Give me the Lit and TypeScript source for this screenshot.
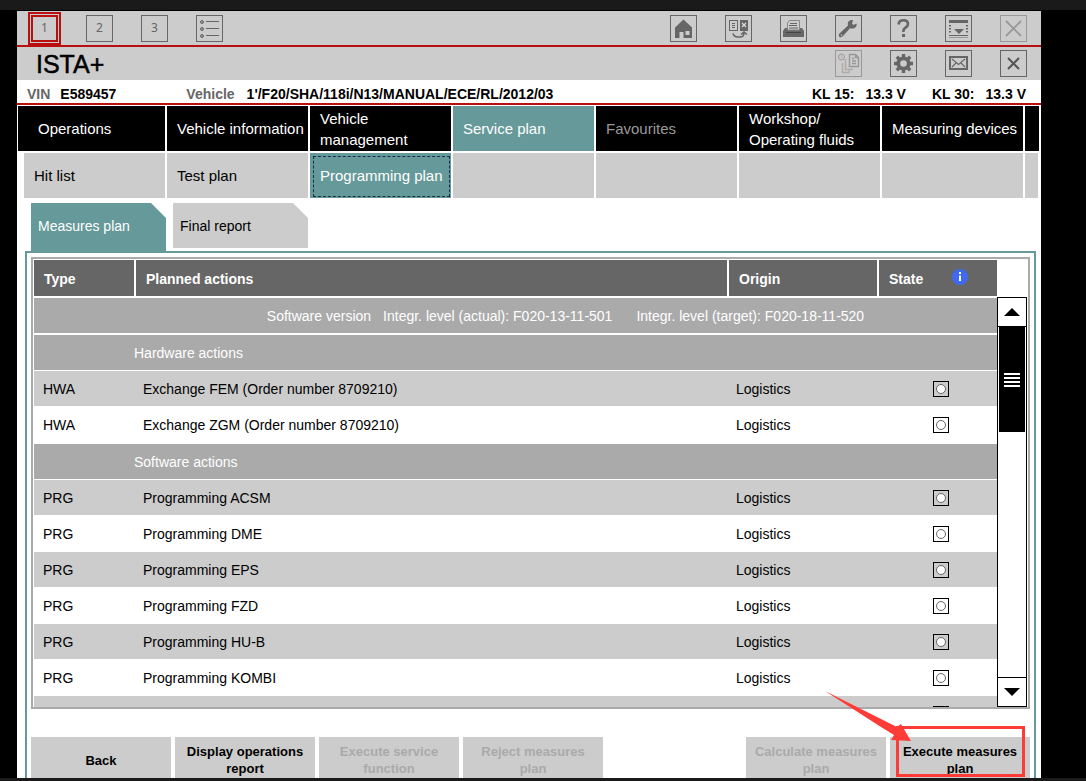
import { LitElement, html, css, svg, nothing } from "lit";
import { customElement, property, state } from "lit/decorators.js";
import { classMap } from "lit/directives/class-map.js";

const icons: Record<string, unknown> = {
  list: svg`<g fill="none" stroke="#666"><circle cx="6" cy="7" r="1.500" fill="#999"/><circle cx="6" cy="14" r="1.500" fill="#999"/><circle cx="6" cy="21" r="1.500" fill="#999"/><path d="M10 6.500h13M10 13.500h13M10 20.500h13"/></g>`,
  home: svg`<path fill="#666" fill-rule="evenodd" d="M13.500 4.500 22 12.500V23H13.500V17H9.500V23H5V12.500ZM15.500 16v4h4v-4Z"/>`,
  swap: svg`<rect x="4.500" y="5.500" width="8" height="10" fill="#ccc" stroke="#666"/><path d="M7 8h3v1H7zM7 10h3v1H7zM7 12h3v1H7z" fill="#666"/><rect x="15" y="5" width="8" height="11" fill="#666"/><path d="m17 8 4 4m0-4-4 4" stroke="#ddd" stroke-width="1.200"/><path d="M8 18.500q1 3.500 5 3.500h2q4 0 4-4M16 19.500l3-2.500 3 2.500" fill="none" stroke="#666" stroke-width="1.600"/>`,
  print: svg`<path d="M5 13H22l2 3v6H3v-6Z" fill="#666"/><path d="M7.500 15V8L9.500 5.500H19.500V15Z" fill="#ccc" stroke="#888"/><path d="M10 8.500h7M9 10.500h8M9 13h9" stroke="#666"/><path d="M6 17.500h15" stroke="#444"/>`,
  wrench: svg`<path d="M21.500 8.500 18.500 10 17 8.500 18 5.200C14.500 4.500 12 7 13 10.500L4.500 18.500C2.500 21 5 23.500 7.500 21.500L15 13.200C19 14.500 22.500 12 21.500 8.500Z" fill="#666"/><circle cx="6.500" cy="20" r=".8" fill="#ccc"/>`,
  help: svg`<path d="M8.500 9.500Q9 5.200 13.500 5.200T18 9Q18 11 15.500 12.600T13.500 17" fill="none" stroke="#666" stroke-width="2.600"/><path d="M12 19h3v3h-3z" fill="#666"/>`,
  minimize: svg`<path d="M4 5h19v3H4zM9 14h10l-5 5zM4 20h19v1H4z" fill="#666"/><path d="M4 22.500h19" stroke="#999"/><path d="M5 10v9M22 10v9" stroke="#666" stroke-width="2" stroke-dasharray="1.500 1.500"/>`,
  closeBig: svg`<path d="m6 6 15 15m0-15L6 21" stroke="#999" stroke-width="1.800"/>`,
  flow: svg`<g fill="none" stroke="#999"><circle cx="6.500" cy="7" r="3"/><path d="M6.500 5v2.500H8" stroke="#b9b3ac"/><path d="M14.500 4.500h6l3 3v9h-9ZM20.500 4.500v3h3M17 8.500h2M17 11h4M17 13.500h4" stroke-width="1.400"/><path d="M10.500 9v10.500H18M7.500 13v9.500H14v-2" stroke="#b3aba3" stroke-width="1.400"/></g>`,
  gear: svg`<circle cx="13.500" cy="13.500" r="5.200" fill="none" stroke="#666" stroke-width="3.800"/><path d="M13.500 4v4M13.500 19v4M4 13.500h4M19 13.500h4M6.800 6.800l2.800 2.800M17.400 17.400l2.800 2.800M20.200 6.800l-2.800 2.800M9.600 17.400l-2.800 2.800" stroke="#666" stroke-width="3.400"/>`,
  mail: svg`<rect x="5" y="7" width="17" height="12" fill="#ccc" stroke="#666" stroke-width="2"/><path d="m7 9 6.500 5.500L20 9M7 17l4-4M20 17l-4-4" fill="none" stroke="#666" stroke-width="1.100"/>`,
  close: svg`<path d="m8 8 11 11m0-11L8 19" stroke="#555" stroke-width="2"/>`,
};

@customElement("ista-tool")
class IstaTool extends LitElement {
  @property() icon = "";
  @property() text = "";
  @property() label = "";
  @property({ type: Boolean }) active = false;
  @property({ type: Boolean }) faded = false;

  static styles = css`
    :host { display: block; }
    .tool {
      display: grid; place-items: center; box-sizing: border-box; width: 27px; height: 27px;
      margin: 0; padding: 0; border: 1px solid #666; background: none; color: #666;
      font: 12px/16px "Noto Sans", "DejaVu Sans", sans-serif;
    }
    .active { border: 2px solid #b90f0f; outline: 2px solid #b90f0f; outline-offset: 1px; }
    .faded { border-color: #999; }
    .glyph { display: block; width: 27px; height: 27px; margin: -1px; }
  `;

  render() {
    return html`<button
      class=${classMap({ tool: true, active: this.active, faded: this.faded })}
      aria-label=${this.label}
      ?disabled=${this.faded}
    >${this.icon
      ? html`<svg class="glyph" viewBox="0 0 27 27" aria-hidden="true">${icons[this.icon]}</svg>`
      : this.text}</button>`;
  }
}

type Row =
  | { kind: "version" }
  | { kind: "section"; title: string }
  | { kind: "item"; type: string; action: string; shaded: boolean };

const rows: Row[] = [
  { kind: "version" },
  { kind: "section", title: "Hardware actions" },
  { kind: "item", type: "HWA", action: "Exchange FEM (Order number 8709210)", shaded: true },
  { kind: "item", type: "HWA", action: "Exchange ZGM (Order number 8709210)", shaded: false },
  { kind: "section", title: "Software actions" },
  { kind: "item", type: "PRG", action: "Programming ACSM", shaded: true },
  { kind: "item", type: "PRG", action: "Programming DME", shaded: false },
  { kind: "item", type: "PRG", action: "Programming EPS", shaded: true },
  { kind: "item", type: "PRG", action: "Programming FZD", shaded: false },
  { kind: "item", type: "PRG", action: "Programming HU-B", shaded: true },
  { kind: "item", type: "PRG", action: "Programming KOMBI", shaded: false },
  { kind: "item", type: "", action: "", shaded: true },
];

@customElement("ista-plan")
class IstaPlan extends LitElement {
  static styles = css`
    :host { display: flex; flex: 1; min-height: 0; }
    .box {
      flex: 1; display: flex; min-width: 0; overflow: hidden;
      border: 2px solid #aaa; padding: 1px 1px 0; font-size: 14px; line-height: 18px;
    }
    .clip { flex: 1; min-width: 0; overflow: hidden; }
    .plan { width: 100%; table-layout: fixed; border-collapse: separate; border-spacing: 0; }
    .c-type { width: 102px; }
    .c-origin { width: 150px; }
    .c-state { width: 118px; }
    .head {
      box-sizing: border-box; height: 38px; padding: 2px 10px 0; text-align: left; color: #fff;
      background: #666; border-right: 2px solid #fff; border-bottom: 2px solid #fff;
    }
    .head:last-child { border-right: 0; }
    .state-head { display: flex; align-items: center; gap: 29px; }
    .info { width: 16px; height: 16px; margin-top: -4px; }
    .band {
      box-sizing: border-box; height: 37px; padding: 0 0 0 100px; background: #aaa; color: #fff;
      border-bottom: 1px solid #fff; text-align: left; font-weight: normal;
    }
    .lower { border-top: 1px solid #fff; }
    .first { height: 36px; }
    .version { text-align: center; border-bottom-width: 2px; }
    .levels { display: flex; justify-content: center; white-space: nowrap; }
    .level { margin-left: 12px; }
    .target { margin-left: 24px; }
    .cell { box-sizing: border-box; height: 36px; padding: 0 7px; border-bottom: 1px solid #fff; }
    .shaded { background: #ccc; }
    .type { padding-left: 9px; }
    .pick {
      display: grid; place-items: center; box-sizing: border-box; width: 16px; height: 16px;
      margin-left: 47px; border: 1px solid #000;
    }
    .radio {
      appearance: none; box-sizing: border-box; width: 10px; height: 10px; margin: 0;
      border: 1px solid #666; border-radius: 50%; background: #fff;
    }
    .scroll {
      display: flex; flex-direction: column; box-sizing: border-box; width: 30px; margin-top: 37px;
      border: 1px solid #000; background: #fff;
    }
    .step {
      display: grid; place-items: center; box-sizing: border-box; width: 28px; height: 29px;
      padding: 0; border: 0; background: #fff;
    }
    .up { border-bottom: 1px solid #000; }
    .down { border-top: 1px solid #000; }
    .track { flex: 1; padding: 0 1px; }
    .thumb { display: grid; place-items: center; height: 105px; background: #000; }
    .grip {
      width: 16px; height: 14px;
      background: repeating-linear-gradient(#fff 0 2px, #000 2px 4px);
    }
  `;

  private row(r: Row, i: number) {
    if (r.kind === "version") {
      return html`<tr><td class="band version" colspan="4"><div class="levels">
        <span>Software version</span>
        <span class="level">Integr. level (actual): F020-13-11-501</span>
        <span class="target">Integr. level (target): F020-18-11-520</span>
      </div></td></tr>`;
    }
    if (r.kind === "section") {
      const cls = classMap({ band: true, first: i === 1, lower: i > 1 });
      return html`<tr><th class=${cls} colspan="4" scope="rowgroup">${r.title}</th></tr>`;
    }
    const shade = r.shaded ? "shaded" : "";
    return html`<tr>
      <td class="cell type ${shade}">${r.type}</td>
      <td class="cell ${shade}">${r.action}</td>
      <td class="cell ${shade}">${r.type ? "Logistics" : nothing}</td>
      <td class="cell ${shade}"><label class="pick"><input class="radio" type="radio" name="row-${i}" aria-label="State of ${r.action || "next action"}" /></label></td>
    </tr>`;
  }

  render() {
    return html`<div class="box">
      <div class="clip">
        <table class="plan">
          <colgroup><col class="c-type" /><col /><col class="c-origin" /><col class="c-state" /></colgroup>
          <thead><tr>
            <th class="head" scope="col">Type</th>
            <th class="head" scope="col">Planned actions</th>
            <th class="head" scope="col">Origin</th>
            <th class="head" scope="col"><div class="state-head">State
              <svg class="info" viewBox="0 0 16 16" aria-hidden="true"><circle cx="8" cy="8" r="8" fill="#4169f0"/><path d="M7 3h2v2H7zM7 6.500h2V12H7z" fill="#fff"/></svg>
            </div></th>
          </tr></thead>
          <tbody>${rows.map((r, i) => this.row(r, i))}</tbody>
        </table>
      </div>
      <div class="scroll">
        <button class="step up" aria-label="Scroll up"><svg width="16" height="8" viewBox="0 0 16 8"><path d="M0 8 8 0l8 8z"/></svg></button>
        <div class="track"><div class="thumb"><div class="grip"></div></div></div>
        <button class="step down" aria-label="Scroll down"><svg width="16" height="8" viewBox="0 0 16 8"><path d="M0 0h16L8 8z"/></svg></button>
      </div>
    </div>`;
  }
}

@customElement("app-root")
class AppRoot extends LitElement {
  @state() private tab = 0;

  static styles = css`
    :host {
      display: flex; flex-direction: column; box-sizing: border-box; height: 100vh; overflow: hidden;
      background: #000; color: #000; font-family: "Liberation Sans", Arial, sans-serif;
    }
    .strip-top { flex: none; height: 10px; margin-bottom: 1px; background: #1a1a1a; }
    .strip-bottom { flex: none; height: 3px; background: #1a1a1a; }
    .window {
      flex: 1; min-height: 0; display: flex; flex-direction: column; overflow: hidden;
      margin: 0 45px 0 17px; background: #fff;
    }
    .bar {
      flex: none; display: flex; justify-content: space-between; align-items: center;
      box-sizing: border-box; padding: 0 14px; background: #ccc;
    }
    .tools { height: 36px; border-bottom: 2px solid #b90f0f; }
    .brand { height: 33px; padding-left: 19px; }
    .group { display: flex; gap: 28px; }
    .title { margin: 0; font-size: 25px; line-height: 30px; font-weight: normal; -webkit-text-stroke: 0.500px #000; }
    .facts {
      flex: none; display: flex; box-sizing: border-box; height: 25px; padding: 5px 15px 0 10px;
      border-bottom: 2px solid #b90f0f; font-size: 14px; line-height: 18px; font-weight: bold; white-space: nowrap;
    }
    .key { color: #666; }
    .vin { width: 126px; margin-left: 10px; }
    .value { margin-left: 12px; }
    .volts { margin-left: auto; display: flex; gap: 26px; }
    .volt { display: flex; gap: 11px; }
    .nav { flex: none; display: grid; gap: 2px; height: 45px; }
    .main { grid-template-columns: 147px repeat(6, minmax(0, 1fr)) 14px; padding: 1px 2px 2px 1px; }
    .sub { grid-template-columns: 141px repeat(6, minmax(0, 1fr)) 13px; padding: 0 3px 0 7px; }
    .link {
      display: flex; align-items: center; padding-left: 10px; font-size: 15px; line-height: 21px;
      text-decoration: none;
    }
    .main .link { background: #000; color: #fff; }
    .main .link:first-child { padding-left: 20px; }
    .sub .link { background: #ccc; color: #000; }
    .nav .on { background: #669999; color: #fff; }
    .main .off { color: #999; }
    .focus { position: relative; }
    .focus::after { content: ""; position: absolute; inset: 3px 1px 1px 3px; border: 1px dashed #123048; }
    .tabs { flex: none; display: flex; gap: 7px; height: 48px; padding: 5px 14px 0; }
    .tab {
      width: 135px; height: 45px; padding: 0 7px; border: 0; background: #ccc; color: #000; text-align: left;
      font: 14px/18px "Liberation Sans", Arial, sans-serif;
      clip-path: polygon(0 0, calc(100% - 15px) 0, 100% 15px, 100% 100%, 0 100%);
    }
    .tab.on { height: 48px; padding-bottom: 3px; background: #669999; color: #fff; }
    .panel {
      flex: 1; min-height: 0; display: flex; flex-direction: column; margin: 0 5px 0 8px;
      padding: 4px 4px 0; border: 2px solid #669999; border-bottom: 0;
    }
    .actions { flex: none; display: flex; gap: 4px; align-items: flex-start; height: 41px; margin-top: 28px; }
    .action {
      box-sizing: border-box; width: 140px; height: 46px; padding: 0 8px; border: 0; background: #ccc; color: #000;
      font: bold 13px/17px "Liberation Sans", Arial, sans-serif;
    }
    .action:disabled { color: #aaa; }
    .push { margin-left: auto; }
    .target { position: relative; }
    .mark { position: absolute; left: -67px; top: -48px; width: 204px; height: 90px; pointer-events: none; }
  `;

  render() {
    const nav = [
      ["Operations", ""], ["Vehicle information", ""], ["Vehicle management", ""], ["Service plan", "on"],
      ["Favourites", "off"], ["Workshop/ Operating fluids", ""], ["Measuring devices", ""],
    ];
    const sub = ["Hit list", "Test plan", "Programming plan", "", "", "", "", ""];
    return html`
      <div class="strip-top"></div>
      <div class="window">
        <div class="bar tools">
          <div class="group">
            <ista-tool text="1" label="Session 1" active></ista-tool>
            <ista-tool text="2" label="Session 2"></ista-tool>
            <ista-tool text="3" label="Session 3"></ista-tool>
            <ista-tool icon="list" label="Session list"></ista-tool>
          </div>
          <div class="group">
            <ista-tool icon="home" label="Home"></ista-tool>
            <ista-tool icon="swap" label="Switch"></ista-tool>
            <ista-tool icon="print" label="Print"></ista-tool>
            <ista-tool icon="wrench" label="Tools"></ista-tool>
            <ista-tool icon="help" label="Help"></ista-tool>
            <ista-tool icon="minimize" label="Minimize"></ista-tool>
            <ista-tool icon="closeBig" label="Exit" faded></ista-tool>
          </div>
        </div>
        <header class="bar brand">
          <h1 class="title">ISTA+</h1>
          <div class="group">
            <ista-tool icon="flow" label="Documents" faded></ista-tool>
            <ista-tool icon="gear" label="Settings"></ista-tool>
            <ista-tool icon="mail" label="Mail"></ista-tool>
            <ista-tool icon="close" label="Close"></ista-tool>
          </div>
        </header>
        <div class="facts">
          <span class="key">VIN</span><span class="vin">E589457</span>
          <span class="key">Vehicle</span><span class="value">1'/F20/SHA/118i/N13/MANUAL/ECE/RL/2012/03</span>
          <div class="volts">
            <span class="volt"><span>KL 15:</span><span>13.3 V</span></span>
            <span class="volt"><span>KL 30:</span><span>13.3 V</span></span>
          </div>
        </div>
        <nav class="nav main">
          ${nav.map(([t, c]) => html`<a class="link ${c}" href="#">${t}</a>`)}
          <span class="link"></span>
        </nav>
        <nav class="nav sub">
          ${sub.map((t) => t
            ? html`<a class=${classMap({ link: true, on: t === "Programming plan", focus: t === "Programming plan" })} href="#">${t}</a>`
            : html`<span class="link"></span>`)}
        </nav>
        <div class="tabs">
          ${["Measures plan", "Final report"].map((t, i) => html`<button
            class=${classMap({ tab: true, on: this.tab === i })}
            @click=${() => { this.tab = i; }}>${t}</button>`)}
        </div>
        <main class="panel">
          <ista-plan></ista-plan>
          <div class="actions">
            <button class="action">Back</button>
            <button class="action">Display operations report</button>
            <button class="action" disabled>Execute service function</button>
            <button class="action" disabled>Reject measures plan</button>
            <button class="action push" disabled>Calculate measures plan</button>
            <div class="target">
              <button class="action">Execute measures plan</button>
              <svg class="mark" viewBox="0 0 204 90" aria-hidden="true">
                <rect x="74.500" y="38.500" width="126" height="48" fill="none" stroke="#ff3b38" stroke-width="3"/>
                <path d="M2 2 62 32 74 38 78 35 88 52 68 51 71 46 58 38Z" fill="#ff3b38"/>
              </svg>
            </div>
          </div>
        </main>
      </div>
      <div class="strip-bottom"></div>
    `;
  }
}
